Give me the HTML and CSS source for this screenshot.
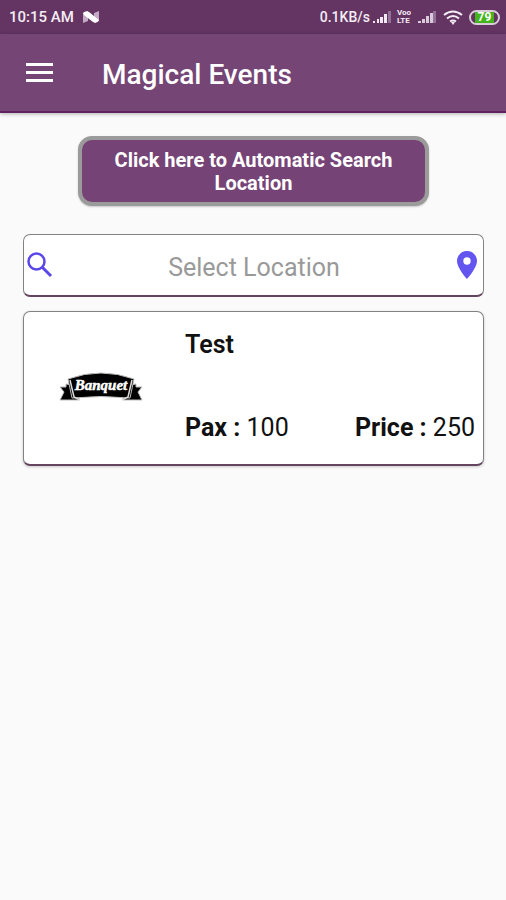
FILE: index.html
```html
<!DOCTYPE html>
<html lang="en">
<head>
<meta charset="utf-8">
<meta name="viewport" content="width=device-width, initial-scale=1">
<title>Magical Events</title>
<link rel="stylesheet" href="styles.css">
</head>
<body>
<div class="status">
  <span class="clock">10:15 AM</span>
  <svg class="notify" width="16" height="12" viewBox="0 0 16 12" aria-hidden="true"><path fill="#c3abc5" d="M0 2l5-2v10l-5 2zM11 2l5-2v10l-5 2z"/><path fill="#fff" d="M0 2q3-3 6-1l10 8q-2 4-6 2L1 4z"/></svg>
  <div class="indicators">
    <span class="speed">0.1KB/s</span>
    <svg class="signal" width="18" height="12" viewBox="0 0 18 12" aria-hidden="true"><path fill="#f1e8f1" d="M0 10h2v2H0zM4 8h2v4H4zM7 6h3v6H7zM11 3h3v9h-3z"/><path fill="#937096" d="M15 0h3v12h-3z"/></svg>
    <span class="volte"><span>Voo</span><span>LTE</span></span>
    <svg class="signal" width="18" height="12" viewBox="0 0 18 12" aria-hidden="true"><path fill="#dac8db" d="M0 10h3v2H0zM4 8h3v4H4zM8 5h3v7H8zM12 2h3v10h-3z"/><path fill="#937096" d="M15 0h3v12h-3z"/></svg>
    <svg class="wifi" width="20" height="15" viewBox="0 0 20 15" fill="none" stroke="#f4edf4" stroke-width="2" aria-hidden="true"><path d="M1 5q9-7 18 0M4 8.500q6-5 12 0M7 11.500q3-2 6 0"/><path fill="#f4edf4" stroke="none" d="M8 12h4l-2 3z"/></svg>
    <span class="battery"><span class="charge">79</span></span>
  </div>
</div>
<header class="appbar">
  <button class="menu" type="button" aria-label="Open menu">
    <svg width="28" height="20" viewBox="0 0 28 20" aria-hidden="true"><path fill="#fff" d="M0 0h27v3H0zM0 8h27v3H0zM0 16h27v3H0z"/></svg>
  </button>
  <h1>Magical Events</h1>
</header>
<main>
  <button class="locate" type="button">Click here to Automatic Search Location</button>
  <div class="search">
    <svg width="26" height="26" viewBox="0 0 26 26" fill="none" stroke="#5a47ea" aria-hidden="true"><circle cx="9.500" cy="9.500" r="8" stroke-width="2.500"/><path stroke-width="3" d="M15 15l9 9"/></svg>
    <input type="text" placeholder="Select Location" aria-label="Select Location">
    <svg width="20" height="28" viewBox="0 0 20 28" aria-hidden="true"><path fill="#6355ef" fill-rule="evenodd" d="M10 0C4.400 0 0 4.400 0 10c0 7 10 18 10 18s10-11 10-18C20 4.400 15.600 0 10 0zm0 6.300a3.700 3.700 0 1 1 0 7.400 3.700 3.700 0 0 1 0-7.400z"/></svg>
  </div>
  <article class="card">
    <svg class="logo" width="84" height="30" viewBox="0 0 84 30" role="img" aria-label="Banquet">
      <g stroke="#bdbdbd" stroke-width="1">
        <path d="M13 13L7 12v3l-6 0 4 5-4 8h19v-6zM71 13l6-1v3l6 0-4 5 4 8H64v-6z"/>
        <path d="M9 7Q42-5 75 7l-4 19q-29-3-58 0z"/>
      </g>
      <path fill="none" stroke="#ddd" stroke-width="1.500" d="M11 8l4 17 6 3M73 8l-4 17-6 3"/>
      <text class="script" x="42" y="18" text-anchor="middle">Banquet</text>
    </svg>
    <div class="details">
      <h2>Test</h2>
      <div class="facts">
        <span><b>Pax :</b> 100</span>
        <span><b>Price :</b> 250</span>
      </div>
    </div>
  </article>
</main>
</body>
</html>
```
FILE: styles.css
```css
* {
  box-sizing: border-box;
}

body {
  margin: 0;
  min-height: 100vh;
  background: #fafafa;
  color: #111;
  font-family: Roboto, "Liberation Sans", sans-serif;
}

button,
input {
  font: inherit;
}

svg {
  display: block;
  flex: none;
}

.status {
  display: flex;
  align-items: center;
  height: 34px;
  padding: 0 6px 0 9px;
  background: #643463;
  color: #f4edf4;
  font-size: 14px;
  font-weight: 500;
}

.clock {
  font-size: 15px;
}

.notify {
  margin-left: 9px;
}

.indicators {
  display: flex;
  align-items: center;
  margin-left: auto;
}

.signal {
  margin-left: 3px;
}

.volte {
  display: flex;
  flex-direction: column;
  margin: 0 4px 0 6px;
  font-size: 8px;
  font-weight: 700;
  line-height: 8px;
}

.wifi {
  margin-left: 7px;
}

.battery {
  display: flex;
  width: 31px;
  height: 15px;
  margin-left: 6px;
  padding: 0 4px;
  border: 2px solid #d9cbd9;
  border-radius: 8px;
}

.charge {
  flex: 1;
  background: #45b51c;
  color: #fff;
  font-size: 12px;
  font-weight: 700;
  line-height: 11px;
  text-align: center;
}

.appbar {
  display: flex;
  align-items: center;
  gap: 48px;
  height: 79px;
  padding: 0 26px;
  border-bottom: 2px solid #62215f;
  background: #754576;
  box-shadow: 0 1px 4px rgba(0, 0, 0, 0.3);
  color: #fff;
}

.menu {
  padding: 0;
  border: 0;
  background: none;
}

h1 {
  margin: 0;
  padding-top: 4px;
  font-size: 28px;
  font-weight: 500;
  line-height: 32px;
}

main {
  display: flex;
  flex-direction: column;
  padding: 23px 22px 24px 23px;
}

.locate {
  margin: 0 55px 28px;
  padding: 9px 24px 7px;
  border: 4px solid #9b9b9b;
  border-radius: 14px;
  background: #754375;
  box-shadow: 0 1px 2px rgba(0, 0, 0, 0.2);
  color: #fff;
  font-size: 20px;
  font-weight: 700;
  line-height: 23px;
}

.search,
.card {
  border: 1px solid #858085;
  border-bottom: 2px solid #64445f;
  border-radius: 7px;
  background: #fff;
}

.search {
  display: flex;
  align-items: center;
  height: 63px;
  margin-bottom: 14px;
  padding: 0 6px 0 3px;
}

.search input {
  flex: 1;
  min-width: 0;
  padding: 4px 2px 0 0;
  border: 0;
  outline: 0;
  background: none;
  font-size: 25px;
  text-align: center;
}

.search input::placeholder {
  color: #999;
  opacity: 1;
}

.card {
  display: flex;
  align-items: center;
  gap: 42px;
  height: 155px;
  padding: 18px 8px 21px 35px;
  box-shadow: 0 1px 3px rgba(0, 0, 0, 0.2);
}

.script {
  fill: #fff;
  font-family: "Liberation Serif", serif;
  font-size: 15px;
  font-style: italic;
  font-weight: 700;
  stroke: #fff;
  stroke-width: 0.5px;
}

.details {
  display: flex;
  flex: 1;
  flex-direction: column;
  justify-content: space-between;
  align-self: stretch;
  font-size: 25px;
  line-height: 30px;
}

h2 {
  margin: 0;
  font-size: 25px;
  font-weight: 600;
}

.facts {
  display: flex;
  justify-content: space-between;
}

.facts b {
  font-weight: 700;
}
```
